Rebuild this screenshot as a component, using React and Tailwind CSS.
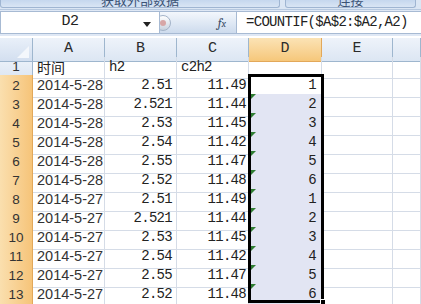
const rows = [
  ["2014-5-28", "2.51", "11.49", "1"],
  ["2014-5-28", "2.521", "11.44", "2"],
  ["2014-5-28", "2.53", "11.45", "3"],
  ["2014-5-28", "2.54", "11.42", "4"],
  ["2014-5-28", "2.55", "11.47", "5"],
  ["2014-5-28", "2.52", "11.48", "6"],
  ["2014-5-27", "2.51", "11.49", "1"],
  ["2014-5-27", "2.521", "11.44", "2"],
  ["2014-5-27", "2.53", "11.45", "3"],
  ["2014-5-27", "2.54", "11.42", "4"],
  ["2014-5-27", "2.55", "11.47", "5"],
  ["2014-5-27", "2.52", "11.48", "6"],
];

const cols = "grid grid-cols-[33px_72px_72px_72px_73px_71px_1fr]";
const mono = "font-mono text-[14px] tracking-[-0.7px]";
const sans = "font-['Liberation_Sans',Arial,sans-serif]";
const cjk = "font-['Noto_Sans_CJK_SC',sans-serif]";
const cell = "border-r border-b border-[#d5dce7] h-full flex items-center";

function Corner() {
  return (
    <div className="relative border-r border-b border-[#9eb6ce] bg-gradient-to-b from-[#e9f0f9] to-[#d3dff0]">
      <div className="absolute right-[3px] bottom-[3px] w-0 h-0 border-l-[12px] border-l-transparent border-b-[12px] border-b-[#f4f7fc]" />
    </div>
  );
}

function ColHead({ label, active }) {
  return (
    <div
      className={`flex items-center justify-center border-r border-b font-mono text-[15px] text-[#2b2b2b] ${
        active
          ? "bg-gradient-to-b from-[#fbe3b5] to-[#f6c77a] border-[#e2a85a]"
          : "bg-gradient-to-b from-[#eef3fa] to-[#dce6f3] border-[#9eb6ce]"
      }`}
    >
      {label}
    </div>
  );
}

function RowHead({ n, active }) {
  return (
    <div
      className={`flex items-center justify-center border-r border-b ${sans} text-[13.5px] text-[#333] ${
        active
          ? "bg-gradient-to-r from-[#fadfae] to-[#f6c479] border-[#e2a85a]"
          : "bg-gradient-to-b from-[#eef3fa] to-[#dce6f3] border-[#9eb6ce]"
      }`}
    >
      {n}
    </div>
  );
}

export default function App() {
  return (
    <div className="w-[421px] h-[304px] overflow-hidden bg-white text-[#222]">
      {/* Ribbon strip */}
      <div className="h-[10px] flex gap-[5px] bg-[#dbe6f4] border-b border-[#b6c8df] overflow-hidden">
        <div className="w-[280px] h-[8px] rounded-b-[3px] border-x border-b border-[#9fb5d2] bg-gradient-to-b from-[#c5d7ee] to-[#d9e5f4] overflow-hidden flex justify-center">
          <span className={`-mt-[7px] ${cjk} text-[13px] leading-[14px] text-[#3b5275]`}>获取外部数据</span>
        </div>
        <div className="w-[131px] h-[8px] rounded-b-[3px] border-x border-b border-[#9fb5d2] bg-gradient-to-b from-[#c5d7ee] to-[#d9e5f4] overflow-hidden flex justify-center">
          <span className={`-mt-[7px] ${cjk} text-[13px] leading-[14px] text-[#3b5275]`}>连接</span>
        </div>
      </div>

      {/* Formula bar */}
      <div className="h-[26px] flex items-stretch bg-[#dfe8f5] pt-[1px] pb-[2px]">
        <div className="w-[160px] bg-white border border-[#a7bad3] flex items-center relative">
          <span className="flex-1 text-center pr-[20px] font-mono text-[15px] tracking-[-0.5px]">D2</span>
          <div className="absolute right-[8px] top-[10px] w-0 h-0 border-x-[4px] border-x-transparent border-t-[5px] border-t-[#222]" />
        </div>
        <div className="w-[77px] flex items-center bg-gradient-to-b from-[#f3f7fc] to-[#cddbed] border-y border-r border-[#a7bad3]">
          <div className="-ml-[5px] w-[16px] h-[16px] rounded-full border border-[#a3b3c8] bg-gradient-to-b from-white to-[#c8d2de] flex items-center justify-center">
            <div className="w-[6px] h-[6px] rounded-full bg-[#d7a6a6]" />
          </div>
          <span className="ml-auto mr-[10px] font-serif italic text-[13px] text-[#3a4c66]">
            f<span className="text-[10px]">x</span>
          </span>
        </div>
        <div className="flex-1 bg-white border-y border-[#a7bad3] flex items-center pl-[9px] whitespace-nowrap">
          <span className={mono}>=COUNTIF($A$2:$A2,A2)</span>
        </div>
      </div>

      {/* Sheet */}
      <div className="mt-[2px] relative">
        <div className={`${cols} h-[19px]`}>
          <Corner />
          <ColHead label="A" />
          <ColHead label="B" />
          <ColHead label="C" />
          <ColHead label="D" active />
          <ColHead label="E" />
          <ColHead label="" />
        </div>

        <div className={`${cols} h-[18px]`}>
          <RowHead n={1} />
          <div className={`${cell} pl-[4px] ${cjk} text-[14px]`}>时间</div>
          <div className={`${cell} pl-[4px] ${mono}`}>h2</div>
          <div className={`${cell} pl-[4px] ${mono}`}>c2h2</div>
          <div className={cell} />
          <div className={cell} />
          <div className={cell} />
        </div>

        {rows.map((r, i) => (
          <div key={i} className={`${cols} h-[19px]`}>
            <RowHead n={i + 2} active />
            <div className={`${cell} pl-[4px] ${sans} text-[14.5px] text-[#333]`}>{r[0]}</div>
            <div className={`${cell} justify-end pr-[4px] ${mono}`}>{r[1]}</div>
            <div className={`${cell} justify-end pr-[2px] ${mono}`}>{r[2]}</div>
            <div className={`${cell} relative justify-end pr-[5px] ${mono} ${i === 0 ? "bg-white" : "bg-[#e2e5f3]"}`}>
              {i > 0 && (
                <div className="absolute left-[2px] top-0 w-0 h-0 border-r-[5px] border-r-transparent border-t-[5px] border-t-[#2f7d32]" />
              )}
              {r[3]}
            </div>
            <div className={cell} />
            <div className={cell} />
          </div>
        ))}

        {/* selection outline D2:D13 */}
        <div className="absolute left-[248px] top-[36px] w-[76px] h-[229px] border-[3px] border-black pointer-events-none">
          <div className="absolute -right-[5px] -bottom-[5px] w-[6px] h-[6px] bg-black border border-white" />
        </div>
      </div>
    </div>
  );
}
